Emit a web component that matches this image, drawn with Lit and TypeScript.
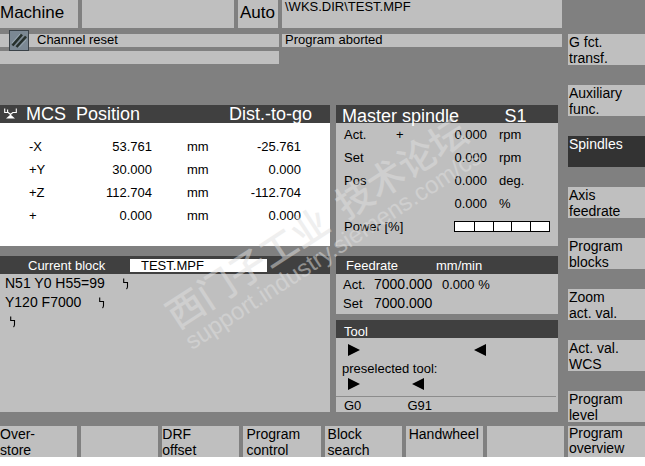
import { LitElement, html, svg, css, nothing } from "lit";
import { customElement } from "lit/decorators.js";
import { classMap } from "lit/directives/class-map.js";

interface SoftKey {
  lines: string[];
  active?: boolean;
  inset?: boolean;
}

const sideKeys: SoftKey[] = [
  { lines: ["G fct.", "transf."] },
  { lines: ["Auxiliary", "func."] },
  { lines: ["Spindles"], active: true },
  { lines: ["Axis", "feedrate"] },
  { lines: ["Program", "blocks"] },
  { lines: ["Zoom", "act. val."] },
  { lines: ["Act. val.", "WCS"] },
  { lines: ["Program", "level"] },
];

const bottomKeys: SoftKey[] = [
  { lines: ["Over-", "store"] },
  { lines: [] },
  { lines: ["DRF", "offset"] },
  { lines: ["Program", "control"], inset: true },
  { lines: ["Block", "search"], inset: true },
  { lines: ["Handwheel"], inset: true },
  { lines: [] },
];

const axes = [
  ["-X", "53.761", "mm", "-25.761"],
  ["+Y", "30.000", "mm", "0.000"],
  ["+Z", "112.704", "mm", "-112.704"],
  ["+", "0.000", "mm", "0.000"],
];

const spindle = [
  ["Act.", "+", "0.000", "rpm"],
  ["Set", "", "0.000", "rpm"],
  ["Pos", "", "0.000", "deg."],
  ["", "", "0.000", "%"],
];

const blocks = ["N51 Y0 H55=99", "Y120 F7000", ""];

@customElement("app-root")
export class AppRoot extends LitElement {
  static styles = css`
    :host {
      display: block;
      position: relative;
      overflow: hidden;
      background: #808080;
      color: #000;
      font: 13px/15px "Liberation Sans", Arial, "Noto Sans CJK SC", sans-serif;
    }
    * { box-sizing: border-box; }
    .screen { display: grid; grid-template-columns: 562fr 77fr; column-gap: 6px; }
    .main { min-width: 0; }
    .cell { background: #bfbfbf; white-space: nowrap; }

    .top { display: grid; grid-template-columns: 78fr 152fr 40fr 280fr; gap: 4px; height: 28px; }
    .mode { font-size: 17px; line-height: 25px; }
    .auto { padding-left: 2px; }
    .path { padding-left: 3px; line-height: 13px; }
    .status { display: grid; grid-template-columns: 279fr 280fr; gap: 4px 3px; margin-top: 6px; }
    .line { height: 13px; line-height: 12px; padding-left: 3px; }
    .channel { position: relative; padding-left: 37px; }
    .reset { position: absolute; left: 9px; top: -4px; }

    .panels {
      display: grid;
      grid-template-columns: 330fr 222fr;
      gap: 10px 6px;
      margin-top: 41px;
      padding-right: 4px;
    }
    .panel { background: #bfbfbf; min-width: 0; }
    .white { background: #fff; }
    .stack { display: grid; gap: 6px; }
    .title {
      display: flex;
      align-items: center;
      height: 18px;
      margin: 0;
      background: #404040;
      color: #fff;
      font-size: 13px;
      font-weight: normal;
      white-space: nowrap;
    }
    .large { font-size: 18px; line-height: 18px; }
    .pos { display: grid; grid-template-columns: 26fr 50fr 153fr 101fr; }
    .pos svg { margin-left: 4px; }
    .spin { display: grid; grid-template-columns: 167fr 55fr; padding: 2px 0 0 6px; }
    .feed { display: grid; grid-template-columns: 90fr 122fr; padding: 0 0 0 10px; }
    .tooltitle { padding: 4px 0 0 8px; }

    table { display: block; width: 100%; border-spacing: 0; }
    tbody { display: block; }
    tr { display: grid; }
    th, td { padding: 0; font-weight: normal; text-align: left; white-space: nowrap; }
    .num { text-align: right; }
    .axes { padding-top: 12px; }
    .axes tr { grid-template-columns: 29fr 123fr 35fr 114fr 29fr; height: 23px; line-height: 23px; }
    .axes th { grid-column: 1 / 3; grid-row: 1; padding-left: 29px; }
    .axes td:nth-child(2) { grid-column: 2; grid-row: 1; }
    .axes td:nth-child(3) { grid-column: 4; grid-row: 1; }
    .axes td:nth-child(4) { grid-column: 4; grid-row: 1; }
    .drive tr { grid-template-columns: 52fr 40fr 51fr 71fr; height: 23px; line-height: 23px; padding-left: 8px; }
    .drive td:nth-child(4) { padding-left: 12px; }
    .drivebody { padding-bottom: 8px; }
    .power { display: grid; grid-template-columns: 110fr 96fr 8fr; align-items: center; height: 23px; padding-left: 8px; }
    .meter { display: grid; grid-template-columns: repeat(5, 1fr); height: 11px; border: 1px solid #000; background: #fff; }
    .meter span + span { border-left: 1px solid #000; }

    .curr { display: grid; grid-template-columns: 102fr 137fr 63fr; padding-left: 28px; }
    .file {
      width: 100%;
      height: 13px;
      margin: 0;
      padding: 0 0 0 11px;
      border: 0;
      border-radius: 0;
      background: #fff;
      color: #000;
      font: inherit;
      line-height: 13px;
    }
    .code { margin: 0; padding: 0 0 0 5px; list-style: none; font-size: 14px; line-height: 19px; }
    .code li { display: flex; align-items: center; gap: 18px; height: 19px; white-space: pre; }
    .code li:last-child { padding-left: 5px; }
    .rates { padding: 1px 0; }
    .rates tr { grid-template-columns: 31fr 68fr 116fr; height: 19px; line-height: 19px; padding-left: 7px; }
    .rates td:nth-child(2) { font-size: 14px; }

    .slot { display: grid; align-items: center; grid-template-columns: 1fr 1fr; height: 23px; padding-left: 12px; }
    .wide { grid-template-columns: 126fr 84fr; }
    .tight { grid-template-columns: 64fr 146fr; height: 16px; }
    .pre { padding-left: 6px; line-height: 15px; }
    .gcodes {
      display: grid;
      grid-template-columns: 64fr 150fr;
      margin: 4px 2px 0 0;
      padding-left: 8px;
      border-top: 1px solid #8c8c8c;
      line-height: 17px;
      height: 16px;
    }

    .side { display: flex; flex-direction: column; gap: 20px; padding-top: 34px; }
    .key {
      display: flex;
      align-items: flex-start;
      width: 100%;
      min-width: 0;
      height: 31px;
      margin: 0;
      padding: 0 0 0 1px;
      border: 0;
      border-radius: 0;
      background: #bfbfbf;
      color: #000;
      font: inherit;
      font-size: 14px;
      line-height: 16px;
      text-align: left;
      white-space: pre;
    }
    .bottom .key { padding-left: 0; }
    .bottom .inset { padding-left: 3px; }
    .bottom .corner { padding-left: 1px; line-height: 15px; }
    .side .active { background: #333; color: #fff; }
    .bottom {
      display: grid;
      grid-template-columns: 564fr 77fr;
      gap: 4px;
      margin-top: 4px;
    }
    .row { display: grid; grid-template-columns: repeat(7, minmax(0, 1fr)); gap: 4px; }
    .foot { height: 9px; background: #fff; }

    .mark {
      position: absolute;
      left: 50%;
      top: 50%;
      transform: translate(-50%, -50%) rotate(-33deg);
      color: #e0e0e0;
      opacity: 0.5;
      text-align: center;
      white-space: nowrap;
      pointer-events: none;
    }
    .mark p { margin: 0; font-size: 24px; line-height: 28px; white-space: pre; }
    .mark .name { font-size: 37px; line-height: 38px; font-weight: 500; font-family: "Noto Sans CJK SC", sans-serif; }
    svg { display: block; flex: none; }
  `;

  private key(k: SoftKey) {
    return html`<button
      class=${classMap({ key: true, active: !!k.active, inset: !!k.inset })}
      aria-label=${k.lines.length ? nothing : "Unassigned"}
    >${k.lines.join("\n")}</button>`;
  }

  private arrow(left = false) {
    return html`<svg width="12" height="14" viewBox="0 0 12 14" aria-hidden="true">
      ${left ? svg`<path d="M12 1v12L0 7z" />` : svg`<path d="M0 1v12l12-6z" />`}
    </svg>`;
  }

  render() {
    return html`
      <div class="screen">
        <main class="main">
          <header>
            <div class="top">
              <div class="cell mode">Machine</div>
              <div class="cell"></div>
              <div class="cell mode auto">Auto</div>
              <div class="cell path">\\WKS.DIR\\TEST.MPF</div>
            </div>
            <div class="status">
              <div class="cell line channel">
                <svg class="reset" width="20" height="21" viewBox="0 0 20 21" aria-hidden="true">
                  <rect x="0.5" y="0.5" width="19" height="20" fill="#7b8893" stroke="#3a4248" />
                  <path d="M3.5 15.5L13 4.5M7.5 17L17 6.5" stroke="#26302c" stroke-width="2.6" />
                  <path d="M3 13L11 4M10 17.5L17.5 9.5" stroke="#9aa8b2" stroke-width="1" />
                </svg>
                Channel reset
              </div>
              <div class="cell line">Program aborted</div>
              <div class="cell line"></div>
            </div>
          </header>

          <div class="panels">
            <section class="panel white">
              <h2 class="title large pos">
                <svg width="14" height="12" viewBox="0 0 14 12" aria-hidden="true">
                  <path d="M0.7 0.5V4.5H4.2L6.5 6.5L8.8 4.5H12.3V0.5M3.6 1.5V4.5" fill="none" stroke="#fff" stroke-width="1.1" />
                  <path d="M6.5 6.5L11 10.5H2z" fill="#fff" />
                </svg>
                <span>MCS</span><span>Position</span><span>Dist.-to-go</span>
              </h2>
              <table class="axes"><tbody>
                ${axes.map(([a, p, u, d]) => html`<tr>
                  <th scope="row">${a}</th><td class="num">${p}</td><td>${u}</td><td class="num">${d}</td>
                </tr>`)}
              </tbody></table>
            </section>

            <section class="panel drivebody">
              <h2 class="title large spin"><span>Master spindle</span><span>S1</span></h2>
              <table class="drive"><tbody>
                ${spindle.map(([a, s, v, u]) => html`<tr>
                  <th scope="row">${a}</th><td>${s}</td><td class="num">${v}</td><td>${u}</td>
                </tr>`)}
              </tbody></table>
              <div class="power">
                <span id="power">Power [%]</span>
                <div class="meter" role="meter" aria-labelledby="power" aria-valuenow="0" aria-valuemin="0" aria-valuemax="100">
                  ${[0, 1, 2, 3, 4].map(() => html`<span></span>`)}
                </div>
              </div>
            </section>

            <section class="panel">
              <div class="title curr">
                <label for="file">Current block</label>
                <input class="file" id="file" readonly .value=${"TEST.MPF"} />
              </div>
              <ol class="code">
                ${blocks.map((b) => html`<li>${b ? html`<span>${b}</span>` : nothing}<svg width="6" height="12" viewBox="0 0 6 12" aria-hidden="true">
                  <path d="M0.7 0.5V4.5H4.5V8.5Q4.5 10 3.5 11" fill="none" stroke="#000" stroke-width="1.1" />
                </svg></li>`)}
              </ol>
            </section>

            <div class="stack">
              <section class="panel">
                <h2 class="title feed"><span>Feedrate</span><span>mm/min</span></h2>
                <table class="rates"><tbody>
                  <tr><th scope="row">Act.</th><td>7000.000</td><td>0.000 %</td></tr>
                  <tr><th scope="row">Set</th><td>7000.000</td></tr>
                </tbody></table>
              </section>
              <section class="panel">
                <h2 class="title tooltitle">Tool</h2>
                <div class="slot wide">${this.arrow()}${this.arrow(true)}</div>
                <div class="pre">preselected tool:</div>
                <div class="slot tight">${this.arrow()}${this.arrow(true)}</div>
                <div class="gcodes"><span>G0</span><span>G91</span></div>
              </section>
            </div>
          </div>
        </main>
        <nav class="side" aria-label="Vertical softkeys">${sideKeys.map((k) => this.key(k))}</nav>
      </div>
      <nav class="bottom" aria-label="Horizontal softkeys">
        <div class="row">${bottomKeys.map((k) => this.key(k))}</div>
        <button class="key corner">${"Program\noverview"}</button>
      </nav>
      <div class="foot"></div>
      <div class="mark" aria-hidden="true">
        <p class="name">西门子工业  技术论坛</p>
        <p>support.industry.siemens.com/cs</p>
      </div>
    `;
  }
}
